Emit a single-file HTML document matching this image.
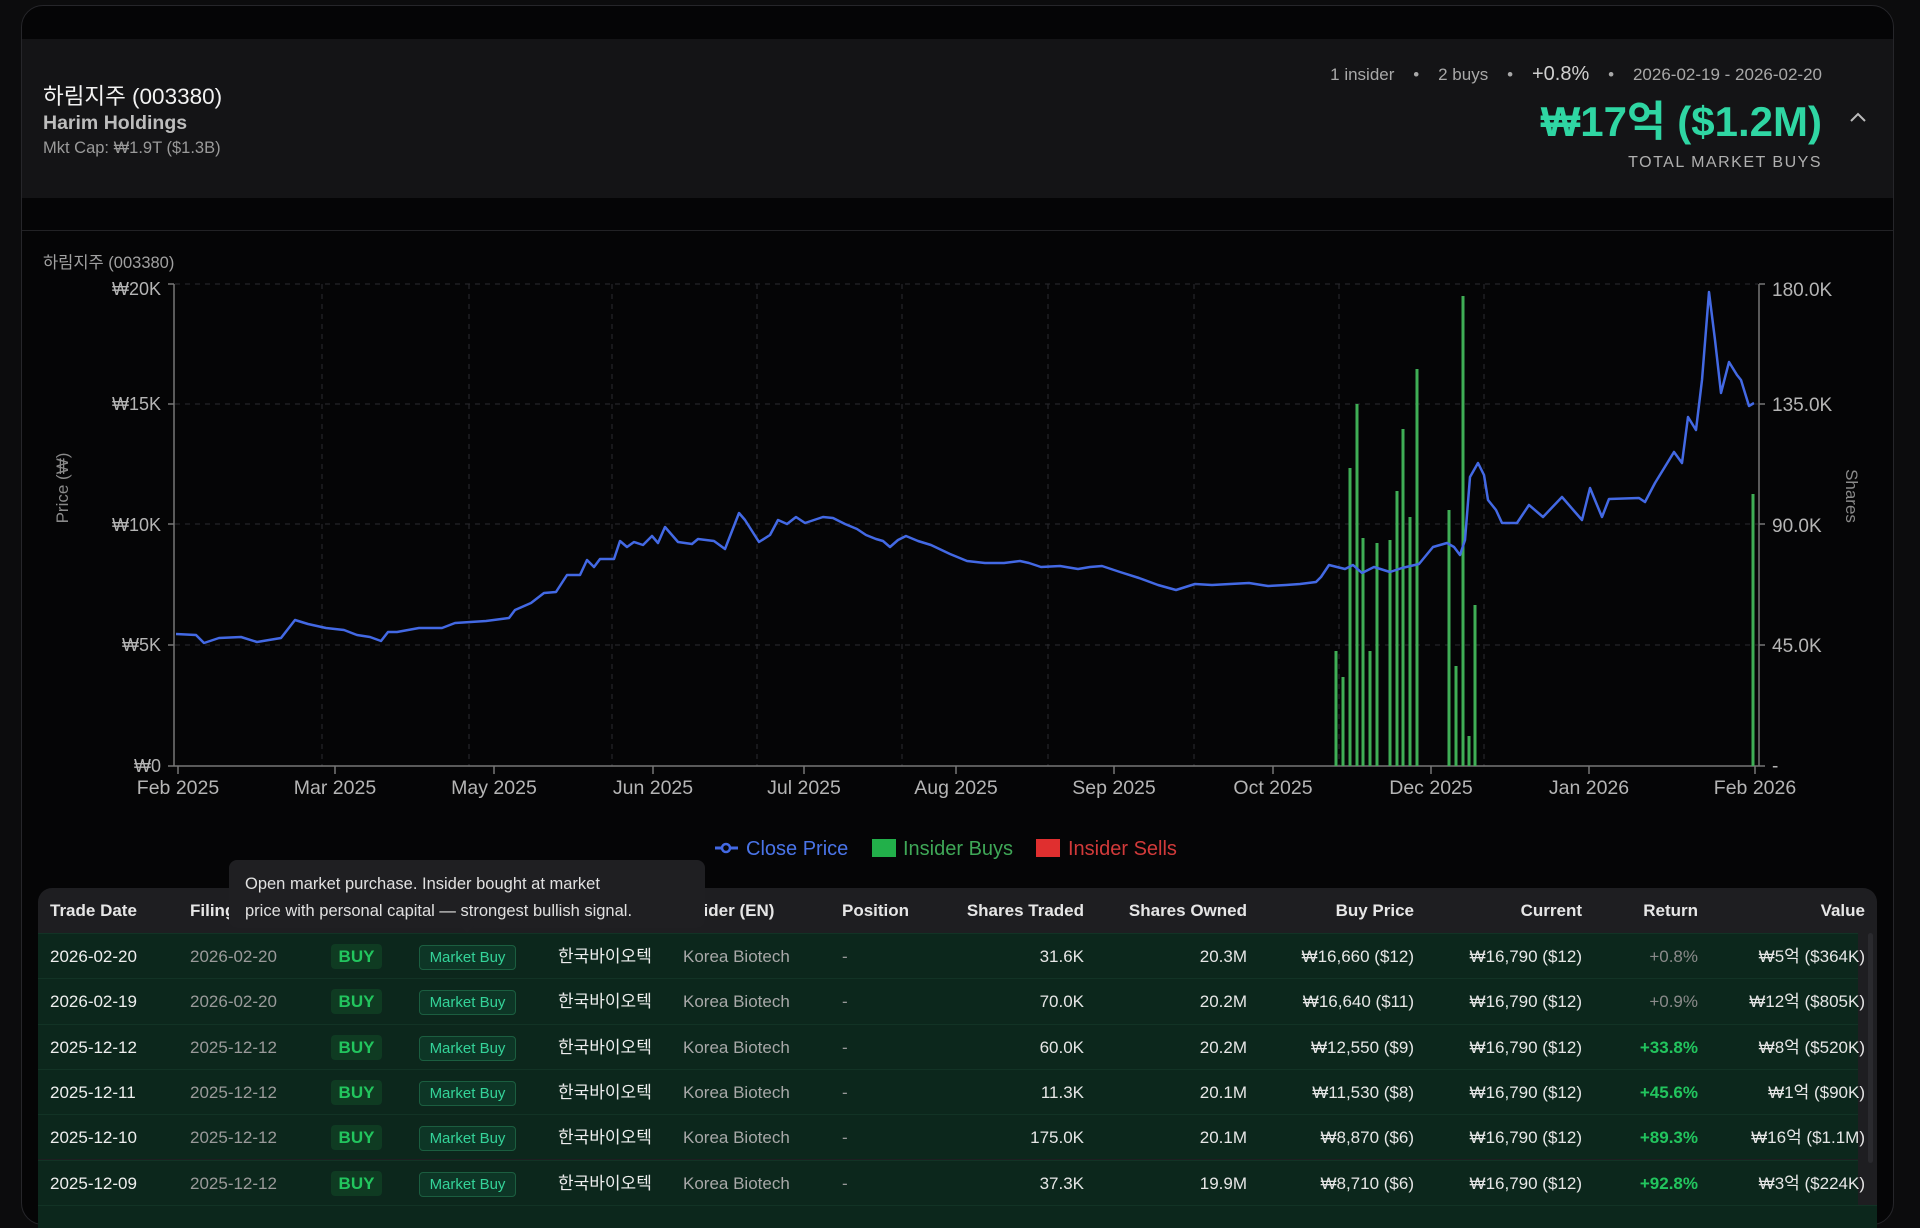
<!DOCTYPE html>
<html><head><meta charset="utf-8"><style>
*{margin:0;padding:0;box-sizing:border-box}
body{width:1920px;height:1213px;background:#0c0c0d;font-family:"Liberation Sans","Noto Sans CJK KR",sans-serif;overflow:hidden;position:relative;color:#ddd}
.card{position:absolute;left:21px;top:5px;width:1873px;height:1220px;background:#050506;border:1px solid #26262a;border-radius:22px;overflow:hidden}
.hdr{position:absolute;left:0;top:33px;width:100%;height:159px;background:#141416}
.sep{position:absolute;left:0;top:224px;width:100%;height:1px;background:#222225}
.a{position:absolute;white-space:nowrap}
.tbl{position:absolute;left:38px;top:888px;width:1839px;height:340px;background:#1e1e21;border-radius:14px 14px 0 0;overflow:hidden}
.th{position:absolute;top:0;height:45px;line-height:45px;font-size:17px;color:#e6e6e6;font-weight:bold}
.row{position:absolute;left:0;width:1820px;height:45.3px;background:#0c271c;border-top:1px solid #123325}
.c{position:absolute;top:0;height:45px;line-height:45px;font-size:17px;white-space:nowrap}
.r{text-align:right}
.buy{position:absolute;top:10px;left:293px;width:51px;height:25px;line-height:25px;text-align:center;background:#0f3b22;color:#22c55e;font-weight:bold;font-size:17px;border-radius:4px}
.mb{position:absolute;top:11px;left:381px;width:97px;height:25px;line-height:23px;text-align:center;background:#0d3626;border:1px solid #1b5e40;color:#34d399;font-size:15px;border-radius:4px}
</style></head><body>
<div class="card">
 <div class="hdr"></div>
 <div class="sep"></div>
</div>
<div class="a" style="left:43px;top:79px;font-size:22.5px;color:#f2f2f2">하림지주 (003380)</div>
<div class="a" style="left:43px;top:112px;font-size:19.5px;color:#bdbdbd;font-weight:bold">Harim Holdings</div>
<div class="a" style="left:43px;top:139px;font-size:16.5px;color:#9a9a9a">Mkt Cap: ₩1.9T ($1.3B)</div>
<div class="a" style="right:98px;top:63px;font-size:17px;color:#a8a8a8">1 insider &nbsp;&nbsp; • &nbsp;&nbsp; 2 buys &nbsp;&nbsp; • &nbsp;&nbsp; <span style="font-size:20px;color:#cfcfcf">+0.8%</span> &nbsp;&nbsp; • &nbsp;&nbsp; 2026-02-19 - 2026-02-20</div>
<div class="a" style="right:98px;top:98px;font-size:42px;color:#2fd6a3;font-weight:bold;line-height:48px">₩17억 ($1.2M)</div>
<div class="a" style="right:98px;top:154px;font-size:16px;color:#b0b0b0;letter-spacing:1.5px">TOTAL MARKET BUYS</div>
<svg class="a" style="left:1849px;top:110px" width="18" height="14"><path d="M2 11 L9 4 L16 11" stroke="#bbb" stroke-width="2" fill="none"/></svg>
<div class="a" style="left:43px;top:249px;font-size:16.5px;color:#a0a0a0">하림지주 (003380)</div>

<svg class="a" style="left:0;top:0" width="1920" height="880" font-family="Liberation Sans, sans-serif">
 <g stroke="#2c2c30" stroke-dasharray="5 5" stroke-width="1">
  <line x1="175" y1="284" x2="1758" y2="284"/><line x1="175" y1="404" x2="1758" y2="404"/><line x1="175" y1="524" x2="1758" y2="524"/><line x1="175" y1="645" x2="1758" y2="645"/>
  <line x1="322" y1="284" x2="322" y2="766"/><line x1="469" y1="284" x2="469" y2="766"/><line x1="612" y1="284" x2="612" y2="766"/><line x1="757" y1="284" x2="757" y2="766"/><line x1="902" y1="284" x2="902" y2="766"/><line x1="1048" y1="284" x2="1048" y2="766"/><line x1="1194" y1="284" x2="1194" y2="766"/><line x1="1339" y1="284" x2="1339" y2="766"/><line x1="1484" y1="284" x2="1484" y2="766"/>
 </g>
 <g stroke="#777" stroke-width="1.5" fill="none">
  <line x1="174" y1="284" x2="174" y2="766"/><line x1="174" y1="766" x2="1759" y2="766"/><line x1="1759" y1="284" x2="1759" y2="766"/>
  <line x1="168" y1="284" x2="174" y2="284"/><line x1="168" y1="404" x2="174" y2="404"/><line x1="168" y1="524" x2="174" y2="524"/><line x1="168" y1="645" x2="174" y2="645"/><line x1="168" y1="766" x2="174" y2="766"/>
  <line x1="1759" y1="284" x2="1765" y2="284"/><line x1="1759" y1="404" x2="1765" y2="404"/><line x1="1759" y1="524" x2="1765" y2="524"/><line x1="1759" y1="645" x2="1765" y2="645"/><line x1="1759" y1="766" x2="1765" y2="766"/>
  <g><line x1="178" y1="766" x2="178" y2="774"/><line x1="335" y1="766" x2="335" y2="774"/><line x1="494" y1="766" x2="494" y2="774"/><line x1="653" y1="766" x2="653" y2="774"/><line x1="804" y1="766" x2="804" y2="774"/><line x1="956" y1="766" x2="956" y2="774"/><line x1="1114" y1="766" x2="1114" y2="774"/><line x1="1273" y1="766" x2="1273" y2="774"/><line x1="1431" y1="766" x2="1431" y2="774"/><line x1="1589" y1="766" x2="1589" y2="774"/><line x1="1755" y1="766" x2="1755" y2="774"/></g>
 </g>
 <g font-size="18" fill="#b5b5b5" text-anchor="end">
  <text x="161" y="295">₩20K</text><text x="161" y="410">₩15K</text><text x="161" y="531">₩10K</text><text x="161" y="651">₩5K</text><text x="161" y="772">₩0</text>
 </g>
 <g font-size="19" fill="#b5b5b5">
  <text x="1772" y="296">180.0K</text><text x="1772" y="411">135.0K</text><text x="1772" y="532">90.0K</text><text x="1772" y="652">45.0K</text><text x="1772" y="772">-</text>
 </g>
 <g font-size="19.5" fill="#b5b5b5" text-anchor="middle">
  <text x="178" y="794">Feb 2025</text><text x="335" y="794">Mar 2025</text><text x="494" y="794">May 2025</text><text x="653" y="794">Jun 2025</text><text x="804" y="794">Jul 2025</text><text x="956" y="794">Aug 2025</text><text x="1114" y="794">Sep 2025</text><text x="1273" y="794">Oct 2025</text><text x="1431" y="794">Dec 2025</text><text x="1589" y="794">Jan 2026</text><text x="1755" y="794">Feb 2026</text>
 </g>
 <text x="68" y="488" font-size="17" fill="#8a8a8a" text-anchor="middle" transform="rotate(-90 68 488)">Price (₩)</text>
 <text x="1846" y="496" font-size="17" fill="#8a8a8a" text-anchor="middle" transform="rotate(90 1846 496)">Shares</text>
 <g stroke="#3fae55" stroke-width="3">
  <line x1="1336" y1="651" x2="1336" y2="766"/><line x1="1343" y1="677" x2="1343" y2="766"/><line x1="1350" y1="468" x2="1350" y2="766"/><line x1="1357" y1="404" x2="1357" y2="766"/><line x1="1363" y1="538" x2="1363" y2="766"/><line x1="1370" y1="651" x2="1370" y2="766"/><line x1="1377" y1="543" x2="1377" y2="766"/><line x1="1390" y1="540" x2="1390" y2="766"/><line x1="1397" y1="491" x2="1397" y2="766"/><line x1="1403" y1="429" x2="1403" y2="766"/><line x1="1410" y1="517" x2="1410" y2="766"/><line x1="1417" y1="369" x2="1417" y2="766"/><line x1="1449" y1="510" x2="1449" y2="766"/><line x1="1456" y1="666" x2="1456" y2="766"/><line x1="1463" y1="296" x2="1463" y2="766"/><line x1="1469" y1="736" x2="1469" y2="766"/><line x1="1475" y1="605" x2="1475" y2="766"/><line x1="1753" y1="494" x2="1753" y2="766"/>
 </g>
 <polyline fill="none" stroke="#4369e4" stroke-width="2.5" stroke-linejoin="round" points="176,634 196,635 204,643 219,638 241,637 257,642 281,638 295,620 308,624 326,628 344,630 357,635 370,637 381,641 388,632 397,632 419,628 442,628 455,623 486,621 509,618 515,610 531,603 544,593 556,592 567,575 580,575 587,560 594,567 600,559 614,559 620,541 627,547 634,542 643,545 652,536 658,543 665,527 678,542 692,544 698,539 714,541 725,549 739,513 745,520 759,542 770,535 778,520 787,524 796,517 805,523 814,520 823,517 833,518 845,524 857,529 866,535 876,539 883,541 890,547 898,540 906,536 918,541 931,545 950,554 967,561 985,563 1004,563 1020,561 1029,563 1041,567 1060,566 1078,569 1090,567 1102,566 1120,572 1139,578 1158,585 1176,590 1195,584 1212,585 1230,584 1249,583 1268,586 1286,585 1300,584 1316,582 1321,577 1329,565 1345,569 1353,565 1362,573 1374,567 1390,572 1402,568 1419,564 1433,547 1447,543 1454,547 1460,555 1465,540 1470,477 1478,463 1484,475 1488,500 1496,510 1502,523 1517,523 1529,505 1543,517 1562,497 1575,512 1582,520 1590,488 1597,505 1602,517 1609,499 1639,498 1645,502 1655,483 1674,452 1682,463 1688,417 1696,430 1702,380 1709,292 1715,340 1721,393 1729,362 1737,375 1741,380 1749,406 1754,403"/>
 <line x1="715" y1="848" x2="738" y2="848" stroke="#4369e4" stroke-width="3"/><circle cx="726" cy="848" r="4" fill="#050506" stroke="#4369e4" stroke-width="2.5"/>
 <text x="746" y="855" font-size="20" fill="#4a74e8">Close Price</text>
 <rect x="872" y="839" width="24" height="18" fill="#22b04a"/>
 <text x="903" y="855" font-size="20" fill="#3fa857">Insider Buys</text>
 <rect x="1036" y="839" width="24" height="18" fill="#e02f2f"/>
 <text x="1068" y="855" font-size="20" fill="#d23a3a">Insider Sells</text>
</svg>

<div class="tbl">
 <div class="th" style="left:12px">Trade Date</div>
 <div class="th" style="left:152px">Filing Date</div>
 <div class="th" style="left:641px">Insider (EN)</div>
 <div class="th" style="left:804px">Position</div>
 <div class="th r" style="right:793px">Shares Traded</div>
 <div class="th r" style="right:630px">Shares Owned</div>
 <div class="th r" style="right:463px">Buy Price</div>
 <div class="th r" style="right:295px">Current</div>
 <div class="th r" style="right:179px">Return</div>
 <div class="th r" style="right:12px">Value</div>
 <div id="rows"></div>
</div>
<div style="position:absolute;left:1868px;top:933px;width:5px;height:230px;background:#2a2a2e;border-radius:3px"></div>

<div class="a" style="left:229px;top:860px;width:476px;height:68px;background:#1f1f22;border-radius:8px;padding:11px 16px;font-size:16.5px;line-height:27px;color:#e0e0e0">Open market purchase. Insider bought at market<br>price with personal capital — strongest bullish signal.</div>
<div class="a" style="left:460px;top:926px;width:0;height:0;border-left:7px solid transparent;border-right:7px solid transparent;border-top:7px solid #1f1f22"></div>

<script>
var d=[["2026-02-20","2026-02-20","31.6K","20.3M","₩16,660 ($12)","+0.8%","₩5억 ($364K)",0],
["2026-02-19","2026-02-20","70.0K","20.2M","₩16,640 ($11)","+0.9%","₩12억 ($805K)",0],
["2025-12-12","2025-12-12","60.0K","20.2M","₩12,550 ($9)","+33.8%","₩8억 ($520K)",1],
["2025-12-11","2025-12-12","11.3K","20.1M","₩11,530 ($8)","+45.6%","₩1억 ($90K)",1],
["2025-12-10","2025-12-12","175.0K","20.1M","₩8,870 ($6)","+89.3%","₩16억 ($1.1M)",1],
["2025-12-09","2025-12-12","37.3K","19.9M","₩8,710 ($6)","+92.8%","₩3억 ($224K)",1]];
var h="";
d.forEach(function(r,i){
h+='<div class="row" style="top:'+(45+i*45.3)+'px">'+
'<div class="c" style="left:12px;color:#eee">'+r[0]+'</div>'+
'<div class="c" style="left:152px;color:#9a9a9a">'+r[1]+'</div>'+
'<div class="buy">BUY</div><div class="mb">Market Buy</div>'+
'<div class="c" style="left:520px;color:#eee">한국바이오텍</div>'+
'<div class="c" style="left:645px;color:#a8a8a8">Korea Biotech</div>'+
'<div class="c" style="left:804px;color:#999">-</div>'+
'<div class="c r" style="right:774px;color:#e6e6e6">'+r[2]+'</div>'+
'<div class="c r" style="right:611px;color:#e6e6e6">'+r[3]+'</div>'+
'<div class="c r" style="right:444px;color:#e6e6e6">'+r[4]+'</div>'+
'<div class="c r" style="right:276px;color:#e6e6e6">₩16,790 ($12)</div>'+
'<div class="c r" style="right:160px;color:'+(r[7]?'#22c55e;font-weight:bold':'#8a8a8a')+'">'+r[5]+'</div>'+
'<div class="c r" style="right:-7px;color:#e6e6e6">'+r[6]+'</div></div>';});
h+='<div class="row" style="top:'+(45+6*45.3)+'px;width:1839px"></div>';
document.getElementById("rows").innerHTML=h;
</script>
</body></html>
